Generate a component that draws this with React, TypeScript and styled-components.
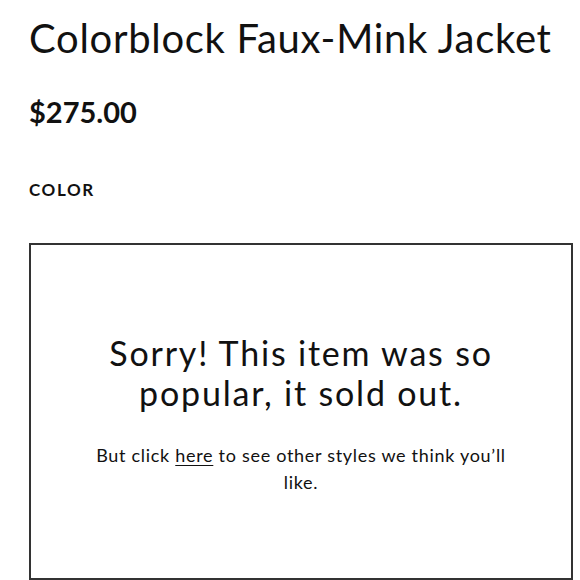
import { createGlobalStyle } from 'styled-components';
import styled from 'styled-components';

const GlobalStyle = createGlobalStyle`
  body {
    margin: 0;
    background: #fff;
    color: #111;
    font-family: Lato, 'Noto Sans', sans-serif;
  }
`;

const Page = styled.div`
  padding: 14px 8px 0 29px;
  display: flex;
  flex-direction: column;
`;

const Title = styled.h1`
  margin: 0;
  font-weight: 400;
  font-size: 40px;
  line-height: 48px;
  letter-spacing: 0.7px;
`;

const Price = styled.div`
  margin-top: 33px;
  font-weight: 700;
  font-size: 29px;
  line-height: 34px;
`;

const Label = styled.div`
  margin-top: 51px;
  font-weight: 700;
  font-size: 17px;
  letter-spacing: 1.6px;
  line-height: 20px;
`;

const SoldOutBox = styled.section`
  margin-top: 43px;
  width: 544px;
  height: 337px;
  box-sizing: border-box;
  border: 2px solid #333;
  padding: 88px 60px 0;
  text-align: center;
`;

const Heading = styled.h2`
  margin: 0;
  font-weight: 400;
  font-size: 34px;
  line-height: 40px;
  letter-spacing: 1.8px;
`;

const Body = styled.p`
  margin: 29px 0 0;
  font-size: 18px;
  line-height: 27px;
  letter-spacing: 0.7px;
`;

const Link = styled.a`
  color: inherit;
  text-decoration: underline;
  text-underline-offset: 3px;
`;

export default function App() {
  return (
    <>
      <GlobalStyle />
      <Page>
        <Title>Colorblock Faux-Mink Jacket</Title>
        <Price>$275.00</Price>
        <Label>COLOR</Label>
        <SoldOutBox>
          <Heading>Sorry! This item was so popular, it sold out.</Heading>
          <Body>
            But click <Link href="#">here</Link> to see other styles we think you’ll like.
          </Body>
        </SoldOutBox>
      </Page>
    </>
  );
}
